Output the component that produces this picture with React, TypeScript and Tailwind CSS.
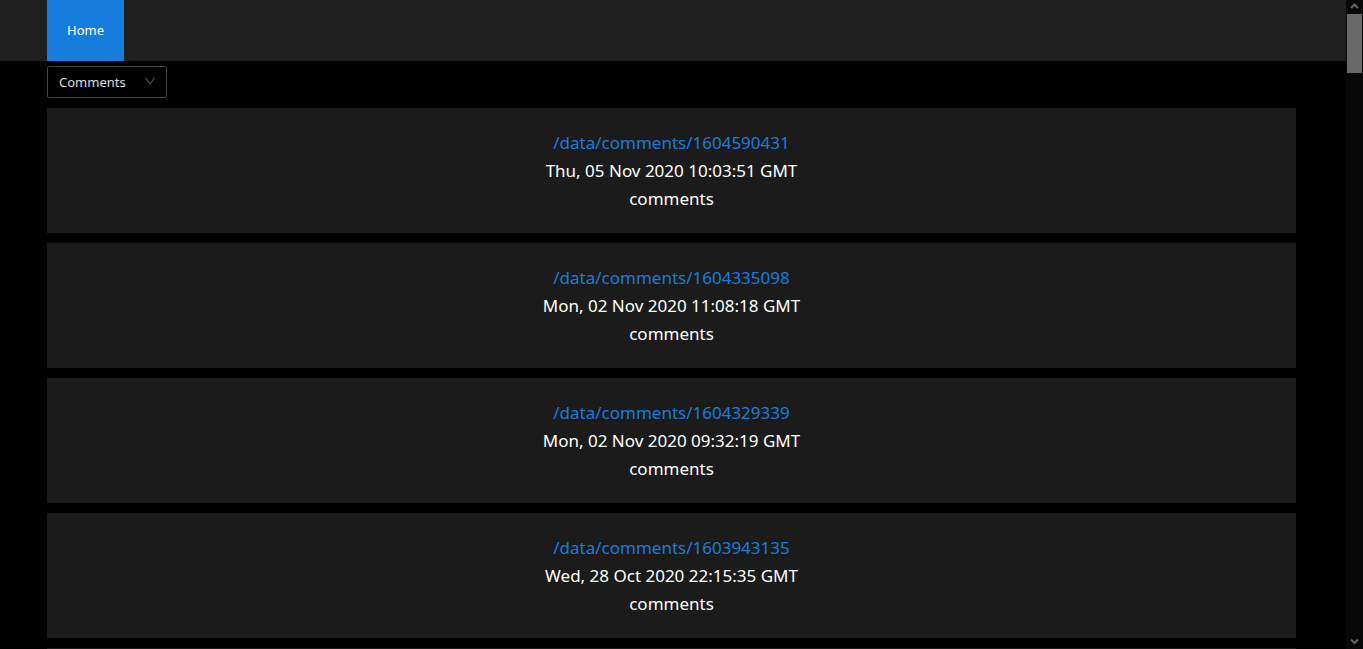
import { useState } from "react";

type Entry = { id: number; date: string; kind: string };

const entries: Entry[] = [
  { id: 1604590431, date: "Thu, 05 Nov 2020 10:03:51 GMT", kind: "comments" },
  { id: 1604335098, date: "Mon, 02 Nov 2020 11:08:18 GMT", kind: "comments" },
  { id: 1604329339, date: "Mon, 02 Nov 2020 09:32:19 GMT", kind: "comments" },
  { id: 1603943135, date: "Wed, 28 Oct 2020 22:15:35 GMT", kind: "comments" },
];

function NavBar() {
  return (
    <nav className="flex bg-[#1f1f1f] pl-[47px]">
      <a href="#home" className="bg-[#177ddc] px-5 pt-[19px] pb-5 text-[13px] leading-[22px] text-white">
        Home
      </a>
    </nav>
  );
}

function KindSelect() {
  const [kind, setKind] = useState("comments");
  return (
    <div className="relative w-[120px]">
      <select
        aria-label="Entry type"
        value={kind}
        onChange={(e) => setKind(e.target.value)}
        className="block h-8 w-full appearance-none rounded-xs border border-[#434343] bg-black pt-0.5 pl-[11px] text-[13px] text-white/85 outline-none"
      >
        <option value="comments">Comments</option>
      </select>
      <svg
        aria-hidden="true"
        viewBox="0 0 12 8"
        className="pointer-events-none absolute top-[11px] right-[11px] h-2 w-3 fill-none stroke-[#4d4d4d]"
      >
        <path d="M1.3 0.7 L6 7 L10.7 0.7" strokeWidth="1.1" />
      </svg>
    </div>
  );
}

function EntryCard({ entry }: { entry: Entry }) {
  return (
    <li className="bg-[#1b1b1b] pt-[21px] pb-5 text-center text-[17px] leading-7 text-white">
      <a href={`#/data/comments/${entry.id}`} className="text-[#177ddc]">
        /data/comments/{entry.id}
      </a>
      <p>{entry.date}</p>
      <p>{entry.kind}</p>
    </li>
  );
}

function ScrollTrack() {
  return (
    <div aria-hidden="true" className="flex w-[17px] shrink-0 flex-col bg-[#080808] px-px">
      <svg viewBox="0 0 15 14" className="h-3.5 w-full fill-none stroke-[#646464]">
        <path d="M4 8 L7.5 4.5 L11 8" strokeWidth="2" />
      </svg>
      <div className="h-[59px] bg-[#696969]" />
      <div className="grow" />
      <svg viewBox="0 0 15 15" className="h-[15px] w-full fill-none stroke-[#646464]">
        <path d="M4 5.5 L7.5 9 L11 5.5" strokeWidth="2" />
      </svg>
    </div>
  );
}

export default function App() {
  return (
    <div className="flex h-screen overflow-hidden bg-black font-['Noto_Sans',sans-serif]">
      <div className="min-w-0 grow">
        <NavBar />
        <main className="pt-[5px] pr-[50px] pl-[47px]">
          <KindSelect />
          <ul className="mt-2.5 flex flex-col gap-2.5">
            {entries.map((entry) => (
              <EntryCard key={entry.id} entry={entry} />
            ))}
            <li className="h-[125px] bg-[#1b1b1b]" />
          </ul>
        </main>
      </div>
      <ScrollTrack />
    </div>
  );
}
